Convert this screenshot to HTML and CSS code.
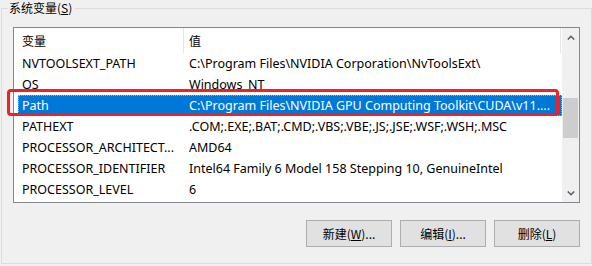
FILE: index.html
```html
<!DOCTYPE html>
<html lang="zh-CN">
<head>
<meta charset="utf-8">
<title>系统变量</title>
<link rel="stylesheet" href="styles.css">
</head>
<body>
<fieldset class="group">
  <legend>系统变量(<u>S</u>)</legend>
  <div class="content">
    <div class="list">
      <div class="main">
        <div class="header">
          <div class="hcell c1">变量</div>
          <div class="hcell c2">值</div>
        </div>
        <div class="row"><div class="cell c1">NVTOOLSEXT_PATH</div><div class="cell c2">C:\Program Files\NVIDIA Corporation\NvToolsExt\</div></div>
        <div class="row"><div class="cell c1">OS</div><div class="cell c2">Windows_NT</div></div>
        <div class="row sel"><div class="cell c1">Path</div><div class="cell c2">C:\Program Files\NVIDIA GPU Computing Toolkit\CUDA\v11....</div></div>
        <div class="row"><div class="cell c1">PATHEXT</div><div class="cell c2">.COM;.EXE;.BAT;.CMD;.VBS;.VBE;.JS;.JSE;.WSF;.WSH;.MSC</div></div>
        <div class="row"><div class="cell c1">PROCESSOR_ARCHITECT...</div><div class="cell c2">AMD64</div></div>
        <div class="row"><div class="cell c1">PROCESSOR_IDENTIFIER</div><div class="cell c2">Intel64 Family 6 Model 158 Stepping 10, GenuineIntel</div></div>
        <div class="row"><div class="cell c1">PROCESSOR_LEVEL</div><div class="cell c2">6</div></div>
      </div>
      <div class="scroll">
        <div class="sbtn"><svg width="8" height="5" viewBox="0 0 8 5"><polyline points="0.8,4.5 4,1.3 7.2,4.5" fill="none" stroke="#606060" stroke-width="1.6"/></svg></div>
        <div class="track"><div class="thumb"></div></div>
        <div class="sbtn down"><svg width="8" height="5" viewBox="0 0 8 5"><polyline points="0.8,0.5 4,3.7 7.2,0.5" fill="none" stroke="#606060" stroke-width="1.6"/></svg></div>
      </div>
    </div>
    <div class="buttons">
      <div class="btn">新建(<u>W</u>)...</div>
      <div class="btn">编辑(<u>I</u>)...</div>
      <div class="btn">删除(<u>L</u>)</div>
    </div>
  </div>
</fieldset>
<div class="callout"></div>
</body>
</html>
```
FILE: styles.css
```css
html, body {
  margin: 0;
  background: #f0f0f0;
}
body {
  position: relative;
  width: 592px;
  height: 266px;
  overflow: hidden;
  font-family: "Noto Sans", "Noto Sans CJK SC", sans-serif;
  font-size: 12px;
  color: #000;
}
.group {
  box-sizing: border-box;
  margin: 1px 0 0 1px;
  padding: 0;
  width: 591px;
  height: 263px;
  border: 1px solid #dcdcdc;
  min-width: 0;
}
.group legend {
  margin-left: 6px;
  padding: 0 3px 0 1px;
  height: 14px;
  line-height: 14px;
  font-family: "Noto Sans CJK SC", sans-serif;
}
.content {
  padding: 12px 11px 0 11px;
}
.list {
  display: flex;
  box-sizing: border-box;
  height: 176px;
  border: 1px solid #828790;
  background: #fff;
}
.main {
  flex: 1;
  min-width: 0;
}
.header {
  display: flex;
  height: 25px;
  padding-right: 1px;
}
.hcell {
  box-sizing: border-box;
  line-height: 25px;
  border-right: 1px solid #e5e5e5;
  font-family: "Noto Sans CJK SC", sans-serif;
}
.hcell.c1 {
  width: 170px;
  padding-left: 8px;
}
.hcell.c2 {
  flex: 1;
  padding-left: 5px;
}
.row {
  display: flex;
  height: 21px;
  line-height: 21px;
  margin-left: 4px;
  white-space: nowrap;
  font-size: 12.5px;
}
.cell {
  box-sizing: border-box;
  overflow: hidden;
}
.cell.c1 {
  width: 165px;
  padding-left: 4px;
}
.cell.c2 {
  flex: 1;
  padding-left: 6px;
}
.row.sel {
  background: #0078d7;
  color: #fff;
  outline: 1px dotted #e9a13b;
  outline-offset: -1px;
}
.scroll {
  width: 17px;
  display: flex;
  flex-direction: column;
  background: #f0f0f0;
}
.sbtn {
  height: 17px;
  display: flex;
  align-items: center;
  justify-content: center;
  padding-top: 2px;
  box-sizing: border-box;
}
.sbtn.down {
  padding-top: 0;
  padding-bottom: 1px;
}
.track {
  flex: 1;
}
.thumb {
  margin: 53px 1px 0 1px;
  height: 40px;
  background: #cdcdcd;
}
.buttons {
  display: flex;
  justify-content: flex-end;
  gap: 8px;
  margin-top: 17px;
}
.btn {
  box-sizing: border-box;
  width: 86px;
  height: 27px;
  border: 1px solid #adadad;
  background: #e1e1e1;
  display: flex;
  align-items: center;
  justify-content: center;
  font-family: "Noto Sans CJK SC", sans-serif;
}
.callout {
  position: absolute;
  left: 7px;
  top: 89px;
  width: 552px;
  height: 27px;
  box-sizing: border-box;
  border: 3px solid #ec2226;
  border-radius: 4px;
}
```
